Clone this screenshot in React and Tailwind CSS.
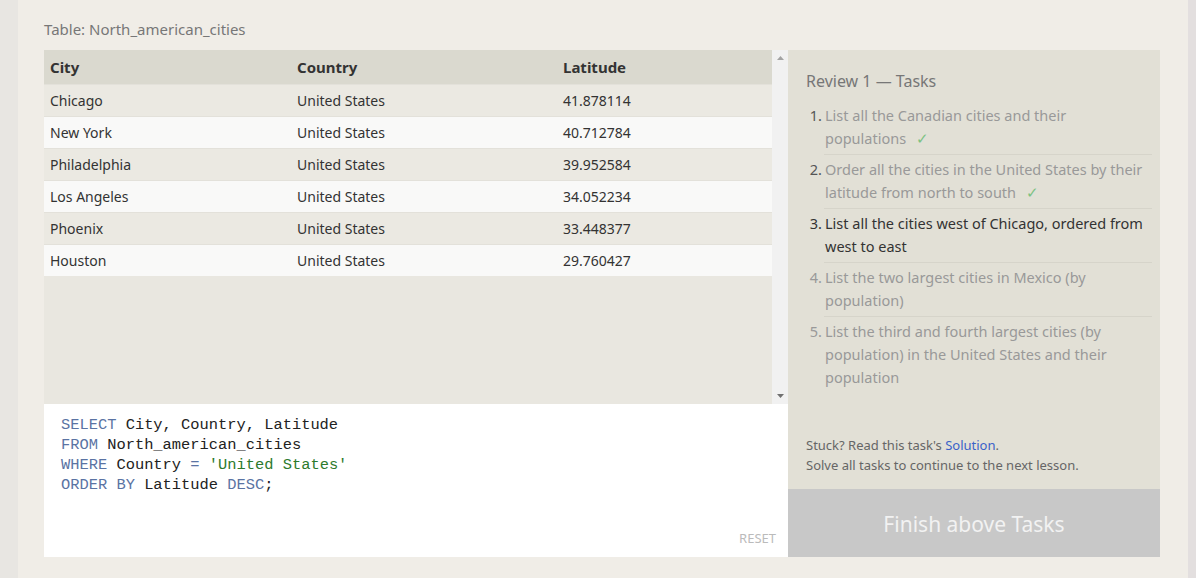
import React from 'react';

const rows = [
  ['Chicago', 'United States', '41.878114'],
  ['New York', 'United States', '40.712784'],
  ['Philadelphia', 'United States', '39.952584'],
  ['Los Angeles', 'United States', '34.052234'],
  ['Phoenix', 'United States', '33.448377'],
  ['Houston', 'United States', '29.760427'],
];

const tasks = [
  { text: 'List all the Canadian cities and their populations', done: true },
  { text: 'Order all the cities in the United States by their latitude from north to south', done: true },
  { text: 'List all the cities west of Chicago, ordered from west to east', active: true },
  { text: 'List the two largest cities in Mexico (by population)' },
  { text: 'List the third and fourth largest cities (by population) in the United States and their population' },
];

const sans = { fontFamily: '"Segoe UI", "Noto Sans", sans-serif' };

export default function App() {
  return (
    <div className="flex w-[1196px] h-[578px] bg-[#e8e6e2]" style={sans}>
      <div className="w-[18px] shrink-0" />
      <div className="flex-1 bg-[#f0ede7] pl-[26px] pr-[28px]">
        <div className="h-[50px] pt-[18px] text-[15px] leading-[22px] text-[#777]">Table: North_american_cities</div>
        <div className="flex h-[507px]">
          {/* left: table + editor */}
          <div className="flex flex-col w-[744px]">
            <div className="flex h-[354px]">
              <div className="flex-1 bg-[#e9e7e0]">
                <div className="flex h-[34px] items-center bg-[#dad9cf] text-[15px] font-bold text-[#333]">
                  <div className="w-[253px] pl-[6px]">City</div>
                  <div className="w-[266px]">Country</div>
                  <div className="flex-1">Latitude</div>
                </div>
                {rows.map((r, i) => (
                  <div
                    key={r[0]}
                    className={`flex h-[32px] items-center pb-[1px] text-[14px] text-[#333] border-t border-[#e3e1da] ${
                      i % 2 === 0 ? 'bg-[#ebe9e2]' : 'bg-[#f9f9f8]'
                    }`}
                  >
                    <div className="w-[253px] pl-[6px]">{r[0]}</div>
                    <div className="w-[266px]">{r[1]}</div>
                    <div className="flex-1">{r[2]}</div>
                  </div>
                ))}
              </div>
              <div className="w-[16px] bg-[#f1f1f1] flex flex-col justify-between items-center py-[6px]">
                <svg width="7" height="4" viewBox="0 0 7 4"><path d="M0 4 L3.5 0 L7 4 Z" fill="#a3a3a3" /></svg>
                <svg width="7" height="4" viewBox="0 0 7 4"><path d="M0 0 L3.5 4 L7 0 Z" fill="#707070" /></svg>
              </div>
            </div>
            <div className="relative flex-1 bg-white pl-[17px] pt-[11px]">
              <pre className="text-[15.4px] leading-[20px] text-[#222]" style={{ fontFamily: '"Liberation Mono", monospace' }}>
                <span className="text-[#5a73a3]">SELECT</span> City, Country, Latitude{'\n'}
                <span className="text-[#5a73a3]">FROM</span> North_american_cities{'\n'}
                <span className="text-[#5a73a3]">WHERE</span> Country <span className="text-[#5a73a3]">=</span> <span className="text-[#2d7a2d]">'United States'</span>{'\n'}
                <span className="text-[#5a73a3]">ORDER BY</span> Latitude <span className="text-[#5a73a3]">DESC</span>;
              </pre>
              <div className="absolute right-[12px] bottom-[9px] text-[13px] text-[#bbb]">RESET</div>
            </div>
          </div>
          {/* right: tasks */}
          <div className="flex flex-col w-[372px] bg-[#e2e0d6]">
            <div className="flex-1 pl-[18px] pr-[8px] pt-[20px] flex flex-col">
              <div className="text-[16px] leading-[22px] text-[#777]">Review 1 — Tasks</div>
              <ol className="mt-[12px]">
                {tasks.map((t, i) => (
                  <li
                    key={i}
                    className={`flex text-[14.5px] leading-[23px] mb-[3px] ${t.active ? 'text-[#333]' : 'text-[#999]'}`}
                  >
                    <span className={`w-[18px] shrink-0 text-right pr-[2px] ${t.done ? 'text-[#555]' : ''}`}>{i + 1}.</span>
                    <span className={`flex-1 pl-[1px] pr-[6px] pb-[4px] ${i < tasks.length - 1 ? 'border-b border-[#d6d4ca]' : ''}`}>
                      {t.text}
                      {t.done && <span className="ml-[10px] text-[#7cc283]">✓</span>}
                    </span>
                  </li>
                ))}
              </ol>
              <div className="mt-auto pb-[14px] text-[13px] leading-[20px] text-[#666]">
                Stuck? Read this task's <span className="text-[#3a62c9]">Solution</span>.
                <br />
                Solve all tasks to continue to the next lesson.
              </div>
            </div>
            <div className="h-[68px] bg-[#c8c8c8] flex items-center justify-center pt-[3px] text-[21px] text-[#f2f2f2]">
              Finish above Tasks
            </div>
          </div>
        </div>
      </div>
      <div className="w-[8px] shrink-0 bg-[#e3dfdf]" />
    </div>
  );
}
